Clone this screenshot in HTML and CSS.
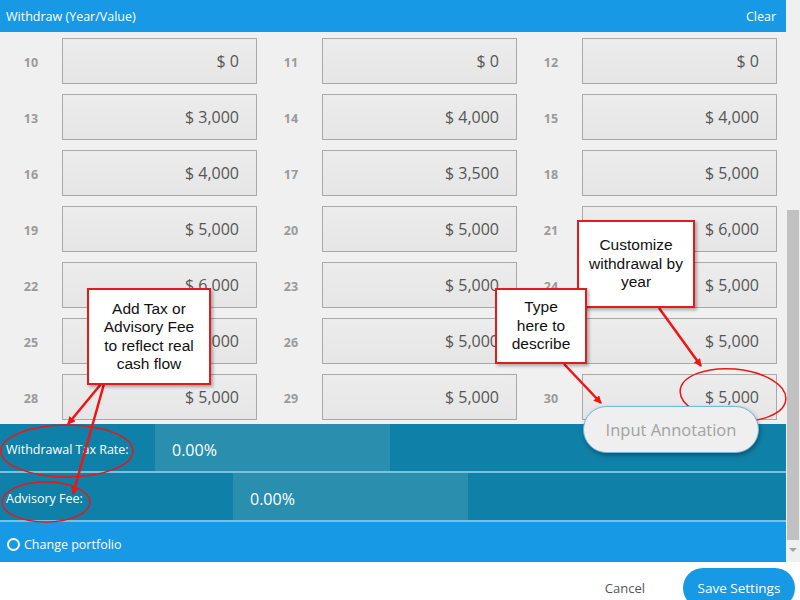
FILE: index.html
```html
<!DOCTYPE html>
<html lang="en">
<head>
    <meta charset="UTF-8">
    <title>Withdraw Settings</title>
    <link rel="stylesheet" href="styles.css">
</head>
<body>
    <div class="pane">
        <div class="main">
            <div class="head">
                <span>Withdraw (Year/Value)</span>
                <span class="clear">Clear</span>
            </div>

            <div class="grid">
                <div class="cell"><span class="year">10</span><div class="box">$ 0</div></div>
                <div class="cell"><span class="year">11</span><div class="box">$ 0</div></div>
                <div class="cell"><span class="year">12</span><div class="box">$ 0</div></div>
                <div class="cell"><span class="year">13</span><div class="box">$ 3,000</div></div>
                <div class="cell"><span class="year">14</span><div class="box">$ 4,000</div></div>
                <div class="cell"><span class="year">15</span><div class="box">$ 4,000</div></div>
                <div class="cell"><span class="year">16</span><div class="box">$ 4,000</div></div>
                <div class="cell"><span class="year">17</span><div class="box">$ 3,500</div></div>
                <div class="cell"><span class="year">18</span><div class="box">$ 5,000</div></div>
                <div class="cell"><span class="year">19</span><div class="box">$ 5,000</div></div>
                <div class="cell"><span class="year">20</span><div class="box">$ 5,000</div></div>
                <div class="cell"><span class="year">21</span><div class="box">$ 6,000</div></div>
                <div class="cell"><span class="year">22</span><div class="box">$ 6,000</div></div>
                <div class="cell"><span class="year">23</span><div class="box">$ 5,000</div></div>
                <div class="cell"><span class="year">24</span><div class="box">$ 5,000</div></div>
                <div class="cell"><span class="year">25</span><div class="box">$ 6,000</div></div>
                <div class="cell"><span class="year">26</span><div class="box">$ 5,000</div></div>
                <div class="cell"><span class="year">27</span><div class="box">$ 5,000</div></div>
                <div class="cell"><span class="year">28</span><div class="box">$ 5,000</div></div>
                <div class="cell"><span class="year">29</span><div class="box">$ 5,000</div></div>
                <div class="cell"><span class="year">30</span><div class="box">$ 5,000</div></div>
            </div>

            <div class="rate-row">
                <span class="rate-label">Withdrawal Tax Rate:</span>
                <div class="rate-input tax">0.00%</div>
            </div>
            <div class="rate-row">
                <span class="rate-label">Advisory Fee:</span>
                <div class="rate-input fee">0.00%</div>
            </div>
            <div class="portfolio">
                <span class="radio"></span>
                <span>Change portfolio</span>
            </div>
        </div>

        <div class="scrollbar">
            <div class="thumb"></div>
            <div class="arrow-down"></div>
        </div>
    </div>

    <div class="footer">
        <span class="cancel">Cancel</span>
        <button class="save">Save Settings</button>
    </div>

    <!-- annotations drawn over the screenshot -->
    <svg class="marks" width="800" height="600" viewBox="0 0 800 600">
        <defs>
            <marker id="head" markerWidth="8" markerHeight="8" refX="7" refY="4" orient="auto" markerUnits="userSpaceOnUse">
                <path d="M0 0 L8 4 L0 8 Z" fill="#f01414"/>
            </marker>
        </defs>
        <g fill="none" stroke="#f01414" stroke-width="1.5">
            <ellipse cx="67" cy="451" rx="66" ry="26"/>
            <ellipse cx="46" cy="502" rx="44" ry="20"/>
            <ellipse cx="733" cy="395" rx="53" ry="26" transform="rotate(5 733 395)"/>
        </g>
        <g stroke="#f01414" stroke-width="2.5" marker-end="url(#head)">
            <line x1="101" y1="384" x2="68" y2="424"/>
            <line x1="104" y1="384" x2="73" y2="494"/>
            <line x1="659" y1="308" x2="701" y2="366"/>
            <line x1="564" y1="364" x2="601" y2="403"/>
        </g>
    </svg>

    <div class="callout c-fee">Add Tax or<br>Advisory Fee<br>to reflect real<br>cash flow</div>
    <div class="callout c-year">Customize<br>withdrawal by<br>year</div>
    <div class="callout c-type">Type<br>here to<br>describe</div>
    <div class="annotation">Input Annotation</div>
</body>
</html>
```

FILE: styles.css
```css
body {
    margin: 0;
    width: 800px;
    height: 600px;
    overflow: hidden;
    position: relative;
    background: #fff;
    font-family: "Open Sans", "Noto Sans", sans-serif;
}

.pane {
    display: flex;
    height: 562px;
}

.main {
    width: 786px;
    display: flex;
    flex-direction: column;
}

.head {
    height: 32px;
    background: #1799e6;
    color: #fff;
    font-size: 12.5px;
    display: flex;
    align-items: center;
    justify-content: space-between;
    padding: 0 10px 0 6px;
}

.grid {
    background: #f0f0f0;
    display: grid;
    grid-template-columns: repeat(3, 260px);
    row-gap: 10px;
    padding: 6px 0 4px;
}

.cell {
    display: flex;
    align-items: center;
}

.year {
    width: 62px;
    text-align: center;
    font-size: 12.5px;
    font-weight: bold;
    color: #9a9a9a;
    padding-top: 2px;
}

.box {
    width: 195px;
    height: 46px;
    box-sizing: border-box;
    border: 1px solid #a9a9a9;
    background: linear-gradient(#ececec, #e6e6e6);
    display: flex;
    align-items: center;
    justify-content: flex-end;
    padding-right: 17px;
    font-size: 16px;
    color: #555;
}

.rate-row {
    height: 47px;
    background: #0f80a7;
    border-bottom: 2px solid #7cc1dc;
    display: flex;
    align-items: center;
    position: relative;
}

.rate-label {
    color: #fff;
    font-size: 12.5px;
    padding: 4px 0 0 6px;
}

.rate-input {
    position: absolute;
    top: 0;
    height: 47px;
    width: 235px;
    background: #2a8eaf;
    color: #fff;
    font-size: 16px;
    display: flex;
    align-items: center;
    padding: 4px 0 0 17px;
    box-sizing: border-box;
}

.rate-input.tax {
    left: 155px;
}

.rate-input.fee {
    left: 233px;
}

.portfolio {
    flex: 1;
    background: #1799e6;
    color: #fff;
    font-size: 12.5px;
    display: flex;
    align-items: center;
    gap: 4px;
    padding: 4px 0 0 7px;
}

.radio {
    width: 9px;
    height: 9px;
    border: 2px solid #fff;
    border-radius: 50%;
}

.scrollbar {
    width: 14px;
    background: #f0f0f0;
    display: flex;
    flex-direction: column;
    align-items: center;
}

.thumb {
    margin-top: 210px;
    width: 12px;
    height: 330px;
    background: #c1c1c1;
}

.arrow-down {
    margin-top: 8px;
    width: 0;
    height: 0;
    border-left: 4px solid transparent;
    border-right: 4px solid transparent;
    border-top: 4px solid #a3a3a3;
}

.footer {
    height: 38px;
    display: flex;
    justify-content: flex-end;
    align-items: flex-start;
    padding-top: 6px;
}

.cancel {
    font-size: 13px;
    color: #555;
    margin: 11px 38px 0 0;
}

.save {
    width: 112px;
    height: 40px;
    border: none;
    border-radius: 20px;
    background: #1799e6;
    color: #fff;
    font-family: inherit;
    font-size: 13.5px;
    margin-right: 5px;
}

/* overlays */
.marks {
    position: absolute;
    left: 0;
    top: 0;
    pointer-events: none;
}

.callout {
    position: absolute;
    box-sizing: border-box;
    background: #fff;
    border: 2px solid #e41b1b;
    box-shadow: 2px 2px 3px rgba(0, 0, 0, 0.3);
    font-family: "Liberation Sans", Arial, sans-serif;
    font-size: 15.5px;
    line-height: 18.5px;
    color: #111;
    text-align: center;
    display: flex;
    align-items: center;
    justify-content: center;
}

.c-fee {
    left: 87px;
    top: 288px;
    width: 124px;
    height: 97px;
}

.c-year {
    left: 577px;
    top: 220px;
    width: 118px;
    height: 88px;
}

.c-type {
    left: 495px;
    top: 288px;
    width: 92px;
    height: 76px;
}

.annotation {
    position: absolute;
    left: 583px;
    top: 406px;
    width: 176px;
    height: 47px;
    box-sizing: border-box;
    border: 1px solid #6fb9e6;
    border-radius: 24px;
    background: #efefef;
    box-shadow: 1px 2px 4px rgba(0, 0, 0, 0.35);
    color: #a2a2a2;
    font-size: 16.5px;
    display: flex;
    align-items: center;
    justify-content: center;
}
```
